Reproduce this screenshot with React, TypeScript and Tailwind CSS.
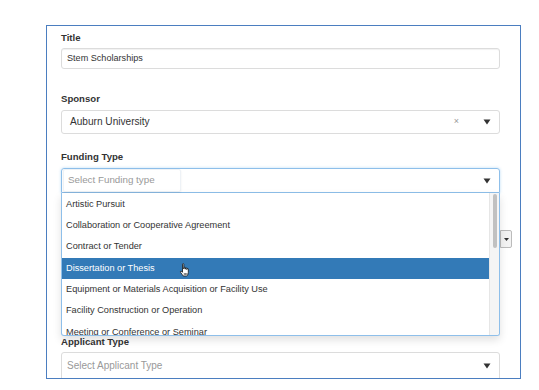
const options = [
  'Artistic Pursuit',
  'Collaboration or Cooperative Agreement',
  'Contract or Tender',
  'Dissertation or Thesis',
  'Equipment or Materials Acquisition or Facility Use',
  'Facility Construction or Operation',
  'Meeting or Conference or Seminar',
]

function Caret() {
  return (
    <svg width="8" height="6" viewBox="0 0 8 6" className="shrink-0">
      <path d="M0.5 0.5 L7.5 0.5 L4 5.5 Z" fill="#333" />
    </svg>
  )
}

function HandCursor() {
  return (
    <svg width="12" height="14" viewBox="0 0 12 14" className="absolute left-[117px] top-[5px]">
      <path
        d="M3.5 1.2 C3.5 0.4 4.8 0.4 4.8 1.2 L4.8 6 L5 4.8 C5 4 6.3 4 6.3 4.8 L6.3 6.2 L6.5 5.3 C6.5 4.6 7.8 4.6 7.8 5.4 L7.8 6.6 L8 6 C8 5.3 9.3 5.3 9.3 6.1 L9.3 9.5 C9.3 11 8.5 12.5 7.8 13 L4.3 13 C3.6 12 2.6 10.8 1.6 9.4 C1.1 8.6 1.8 7.7 2.6 8.4 L3.5 9.3 Z"
        fill="#fff"
        stroke="#111"
        strokeWidth="0.8"
        strokeLinejoin="round"
      />
      <path d="M5.3 10 L5.3 12 M6.6 10 L6.6 12 M7.9 10 L7.9 12" stroke="#111" strokeWidth="0.6" />
    </svg>
  )
}

export default function App() {
  return (
    <div className="w-[539px] h-[390px] bg-white overflow-hidden font-['Liberation_Sans',Arial,sans-serif] text-[#333]">
      <div className="ml-[46px] mt-[25px] w-[475px] h-[354px] border border-[#4b7ec0] pl-[14px] pr-[20px] pt-[6px] overflow-hidden">
        {/* Title */}
        <div className="text-[9.6px] leading-[12px] font-bold mb-[4px]">Title</div>
        <div className="h-[21px] border border-[#dcdcdc] rounded-[3px] shadow-[inset_0_1px_1px_rgba(0,0,0,0.06)] flex items-center pl-[5px] text-[9.1px]">
          Stem Scholarships
        </div>

        {/* Sponsor */}
        <div className="mt-[24px] text-[9.6px] leading-[12px] font-bold mb-[5px]">Sponsor</div>
        <div className="h-[24px] border border-[#dcdcdc] rounded-[3px] flex items-center pl-[8px] pr-[8px] text-[10.1px]">
          <span className="flex-1">Auburn University</span>
          <span className="text-[9px] text-[#999] mr-[24px]">×</span>
          <Caret />
        </div>

        {/* Funding Type */}
        <div className="mt-[17px] text-[9.6px] leading-[12px] font-bold mb-[5px]">Funding Type</div>
        <div className="relative z-10">
          <div className="h-[25px] border border-[#8ebfea] rounded-t-[3px] flex items-center pl-[1px] pr-[8px] shadow-[0_0_3px_rgba(102,175,233,0.45)]">
            <div className="w-[118px] h-[23px] border border-[#eef2f6] rounded-[2px] shadow-[0_1px_2px_rgba(0,0,0,0.08)] flex items-center pl-[4px] text-[9.8px] text-[#999]">
              Select Funding type
            </div>
            <div className="flex-1" />
            <Caret />
          </div>
          <div className="absolute left-0 right-0 top-full h-[143px] bg-white border-x border-b border-[#8ebfea] rounded-b-[3px] shadow-[0_4px_8px_rgba(0,0,0,0.12)] flex overflow-hidden">
            <div className="flex-1 pt-[1px] overflow-hidden">
              {options.map((o, i) => (
                <div
                  key={o}
                  className={`relative h-[21.33px] flex items-center pl-[4px] text-[9.2px] whitespace-nowrap ${
                    i === 3 ? 'bg-[#337ab7] text-white' : ''
                  }`}
                >
                  {o}
                  {i === 3 && <HandCursor />}
                </div>
              ))}
            </div>
            <div className="w-[10px] bg-[#f5f5f5] border-l border-[#e6e6e6] pt-[1px] flex justify-center">
              <div className="w-[4px] h-[54px] rounded-full bg-[#c1c1c1]" />
            </div>
          </div>
        </div>

        {/* hidden field behind the dropdown */}
        <div className="h-[143px] pt-[37px] flex justify-end">
          <div className="w-[12px] h-[18px] -mr-[12px] border border-[#bbb] rounded-r-[2px] bg-[#f3f3f3] flex items-center justify-center">
            <svg width="5" height="3" viewBox="0 0 5 3">
              <path d="M0 0 L5 0 L2.5 3 Z" fill="#333" />
            </svg>
          </div>
        </div>

        {/* Applicant Type */}
        <div className="text-[9.6px] leading-[12px] font-bold mb-[4px]">Applicant Type</div>
        <div className="h-[30px] border border-[#dcdcdc] rounded-[3px] flex items-center pl-[5px] pr-[8px] pb-[3px] text-[10px] text-[#999]">
          <span className="flex-1">Select Applicant Type</span>
          <Caret />
        </div>
      </div>
    </div>
  )
}
